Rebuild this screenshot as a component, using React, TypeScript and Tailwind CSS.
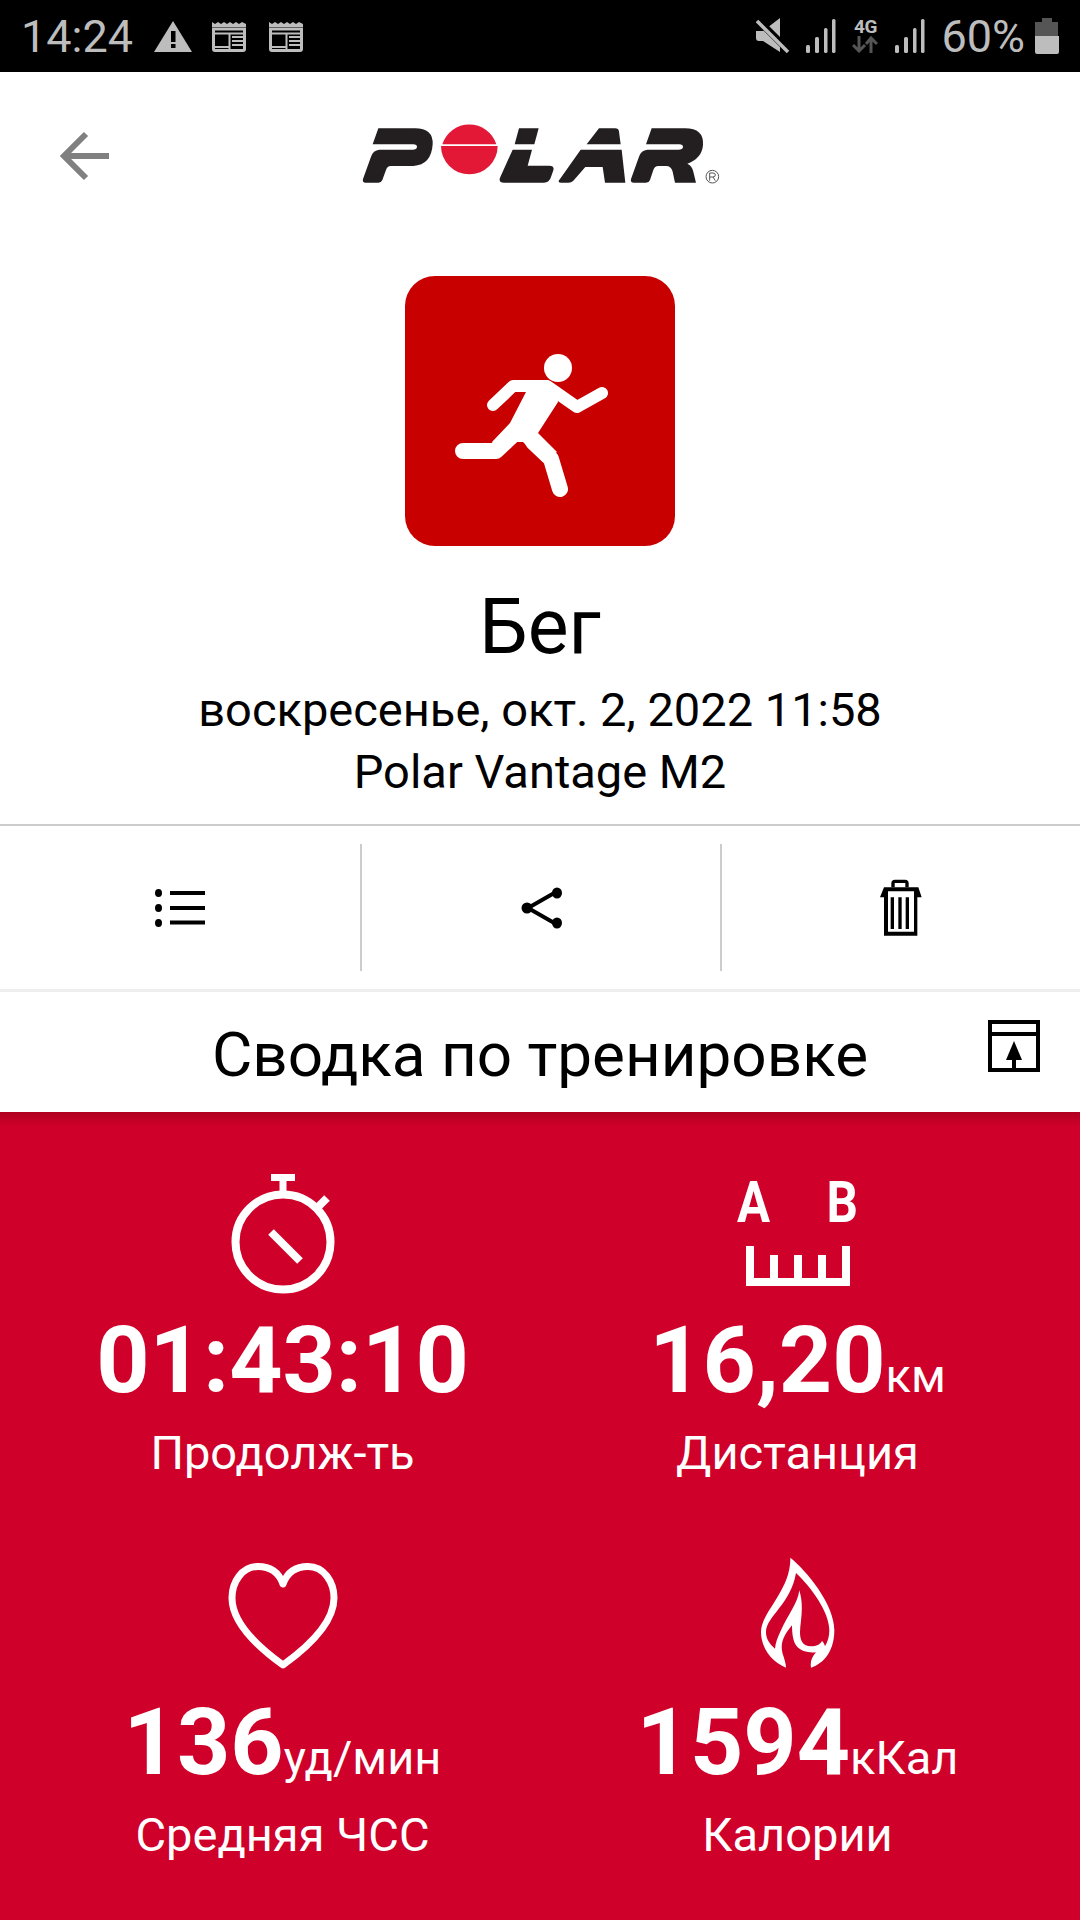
import React from "react";

const F = "font-['Roboto',sans-serif]";

function Logo() {
  return (
    <svg width="380" height="80" viewBox="0 0 1140 240" className="block">
      <g fill="#231f20">
        <path d="M85 40 H195 Q250 40 248 88 Q244 150 190 153 H122 Q112 153 108 165 L97 195 Q94 203 85 203 H47 Q36 203 39 192 L63 125 Q69 106 88 104 H188 Q200 104 201 96 Q201 88 190 88 H68 Z" />
        <path d="M507 40 H566 L553 88 H494 Z" />
        <path d="M488 104 H546 L533 152 H598 Q614 152 610 166 L603 186 Q598 203 582 203 H462 Q445 203 450 188 Z" />
        <path d="M747 40 H795 Q806 40 807 50 L812 88 H710 Z" />
        <path d="M692 104 H815 L826 203 H765 L758 156 H706 L670 197 Q664 203 655 203 H634 Q620 203 630 192 Z" />
        <path d="M905 40 H1005 Q1062 40 1059 90 Q1056 130 1012 146 Q1026 152 1030 170 L1038 203 H975 L968 170 Q964 153 948 153 H925 Q914 153 910 165 L900 195 Q897 203 888 203 H852 Q840 203 843 192 L867 125 Q873 106 892 104 H985 Q998 104 999 96 Q999 88 988 88 H888 Z" />
      </g>
      <path d="M277 88 A85 85 0 0 1 439 88 Z" fill="#e31837" />
      <path d="M273 93 H443 A85 85 0 1 1 273 93 Z" fill="#e31837" />
      <circle cx="1087" cy="185" r="19" fill="none" stroke="#555" strokeWidth="3" />
      <path d="M1079 197 V174 H1089 Q1096 174 1096 180 Q1096 186 1089 186 H1079 M1089 186 L1096 197" fill="none" stroke="#555" strokeWidth="3" />
    </svg>
  );
}

function Runner() {
  return (
    <svg width="270" height="270" viewBox="0 0 270 270" className="block">
      <rect width="270" height="270" rx="30" fill="#c80000" />
      <circle cx="153" cy="92" r="14" fill="#fff" />
      <path d="M88 129 L108 110 H142 L172 131 L197 117" fill="none" stroke="#fff" strokeWidth="12" strokeLinecap="round" strokeLinejoin="round" />
      <path d="M122 114 H150 L153 126 L133 157 L152 176 L138 186 L118 166 L112 166 L92 181 L87 166 L105 147 Z" fill="#fff" />
      <path d="M58 175 H91 L111 156 M128 166 L146 183 L155 213" fill="none" stroke="#fff" strokeWidth="16" strokeLinecap="round" strokeLinejoin="round" />
    </svg>
  );
}

function Stopwatch() {
  return (
    <svg width="106" height="122" viewBox="0 0 106 122" className="block" fill="none" stroke="#fff">
      <path d="M41 3.500 H65 M53 3.500 V18" strokeWidth="7" />
      <circle cx="53" cy="68" r="47.500" strokeWidth="8" />
      <path d="M89 32 L97 24" strokeWidth="8" />
      <path d="M41 58 L70 87" strokeWidth="8" />
    </svg>
  );
}

function Distance() {
  return (
    <div className="flex flex-col items-center w-[122px] mb-[10px]">
      <div className="flex justify-between w-[122px] h-[51px] text-[58px] leading-[51px] font-bold text-white">
        <span className="inline-block scale-x-[0.85] origin-left">A</span>
        <span className="inline-block scale-x-[0.85] origin-right">B</span>
      </div>
      <svg width="104" height="40" viewBox="0 0 104 40" className="block mt-[18px]" fill="none" stroke="#fff" strokeWidth="8">
        <path d="M4 0 V36 H100 V0 M28 9 V36 M52 9 V36 M76 9 V36" />
      </svg>
    </div>
  );
}

function Heart() {
  return (
    <svg width="110" height="106" viewBox="0 0 110 106" className="block" fill="none">
      <path d="M55 21 C50 7 39 3.500 30 3.500 C14 3.500 4 19 4 35 C4 60 30 84 55 102 C80 84 106 60 106 35 C106 19 96 3.500 80 3.500 C71 3.500 60 7 55 21 Z" stroke="#fff" strokeWidth="7" strokeLinejoin="round" />
    </svg>
  );
}

function Flame() {
  return (
    <svg width="74" height="112" viewBox="45 30 222 336" className="block" fill="#fff">
      <path
        fillRule="evenodd"
        d="M133 32 C180 70 265 170 265 250 C265 310 235 350 195 362 C192 345 197 330 210 316 C190 318 165 315 150 295 C140 280 138 255 138 235 C118 260 100 285 110 320 C115 335 120 350 120 362 C75 345 45 300 45 255 C45 195 135 130 133 32 Z M150 78 C195 120 250 195 250 250 C250 268 245 285 237 298 C235 290 232 285 228 282 C222 292 212 298 195 298 C170 298 162 280 162 255 C163 220 175 180 160 130 C155 170 125 205 105 250 C95 270 88 290 87 305 C70 290 60 275 60 255 C60 210 135 170 150 78 Z"
      />
    </svg>
  );
}

function Stat({ icon, value, unit, label, valueClass }: { icon: React.ReactNode; value: string; unit?: string; label: string; valueClass: string }) {
  return (
    <div className="flex flex-col items-center text-white">
      <div className="flex items-end justify-center h-[122px]">{icon}</div>
      <div className={`flex items-baseline justify-center whitespace-nowrap h-[94px] ${valueClass}`}>
        <span className="text-[93px] leading-[94px] font-bold">{value}</span>
        {unit && <span className="text-[47px] leading-[94px]">{unit}</span>}
      </div>
      <div className="text-[47px] leading-[52px] mt-[19px]">{label}</div>
    </div>
  );
}

function Signal({ className }: { className: string }) {
  return (
    <svg width="30" height="34" viewBox="0 0 30 34" className={className} fill="#bdbdbd">
      <rect x="0" y="26" width="4" height="8" rx="1.500" />
      <rect x="9" y="18" width="4" height="16" rx="1.500" />
      <rect x="18" y="9" width="3.500" height="25" rx="1.500" />
      <rect x="26" y="0" width="3.500" height="34" rx="1.500" />
    </svg>
  );
}

export default function App() {
  return (
    <div className={`w-[1080px] h-[1920px] overflow-hidden bg-white flex flex-col ${F}`}>
      <div className="h-[72px] bg-black flex items-center justify-between pl-[21px] pr-[21px] text-[#bdbdbd] shrink-0">
        <div className="flex items-center">
          <span className="text-[45px] leading-none">14:24</span>
          <svg width="38" height="31" viewBox="0 0 38 31" className="ml-[21px]">
            <path d="M19 0 L38 31 H0 Z" fill="#bdbdbd" />
            <rect x="17" y="10" width="4.500" height="11" fill="#000" />
            <rect x="17" y="23" width="4.500" height="4" fill="#000" />
          </svg>
          {[0, 1].map((i) => (
            <svg key={i} width="34" height="31" viewBox="0 0 34 31" className={i === 0 ? "ml-[20px]" : "ml-[23px]"} fill="none" stroke="#bdbdbd">
              <path d="M0 1 L3 3 L6 1 L9 3 L12 1 L15 3 L18 1 L21 3 L24 1 L27 3 L30 1 L34 3 V6 H0 Z" fill="#bdbdbd" stroke="none" />
              <path d="M1.500 8 H32.500 V28 Q32.500 29.500 31 29.500 H3 Q1.500 29.500 1.500 28 Z" strokeWidth="3" />
              <path d="M2 12.500 H32 M17.500 12.500 V28 M20 16 H32 M20 20 H32 M20 24 H32" strokeWidth="2" />
              <path d="M2 26 H17" strokeWidth="2" />
            </svg>
          ))}
        </div>
        <div className="flex items-center">
          <svg width="34" height="36" viewBox="0 0 34 36">
            <path d="M0 13 L7 13 L24 0 V34 L7 23 H3 Q0 23 0 20 Z" fill="#bdbdbd" />
            <path d="M0 0 L33 33" stroke="#000" strokeWidth="7" />
            <path d="M1 3 L32 34" stroke="#bdbdbd" strokeWidth="3.500" />
          </svg>
          <Signal className="ml-[16px]" />
          <div className="ml-[16px] w-[26px] h-[38px] flex flex-col items-center">
            <span className="text-[19px] leading-[19px] font-bold tracking-[-0.5px]">4G</span>
            <svg width="26" height="17" viewBox="0 0 26 17" fill="none" stroke="#555" strokeWidth="3">
              <path d="M7 0 V15 M1 9 L7 15 L13 9" />
              <path d="M19 17 V2 M14 8 L19 2 L25 8" />
            </svg>
          </div>
          <Signal className="ml-[17px]" />
          <span className="text-[45px] leading-none ml-[16px]">60%</span>
          <svg width="24" height="36" viewBox="0 0 24 36" className="ml-[10px]">
            <path d="M7 0 H17 V4 H23 V18 H0 V4 H7 Z" fill="#555" />
            <path d="M0 18 H24 V34 Q24 36 22 36 H2 Q0 36 0 34 Z" fill="#bdbdbd" />
          </svg>
        </div>
      </div>

      <div className="relative h-[148px] shrink-0">
        <svg width="50" height="50" viewBox="0 0 50 50" className="absolute left-[60px] top-[59px]" fill="none" stroke="#808080" strokeWidth="6">
          <path d="M49 25 H5 M26 3 L4 25 L26 47" />
        </svg>
        <div className="absolute left-[350px] top-[43px]">
          <Logo />
        </div>
      </div>

      <div className="flex justify-center shrink-0 mt-[56px]">
        <Runner />
      </div>

      <div className="text-center text-black shrink-0">
        <div className="text-[77px] leading-[84px] mt-[39px]">Бег</div>
        <div className="text-[47px] leading-[52px] mt-[15px]">воскресенье, окт. 2, 2022 11:58</div>
        <div className="text-[47px] leading-[52px] mt-[10px]">Polar Vantage M2</div>
      </div>

      <div className="mt-[26px] h-[2px] bg-[#cccccc] shrink-0" />

      <div className="flex h-[163px] shrink-0 py-[18px]">
        <div className="w-[362px] flex items-center justify-center border-r-2 border-[#cccccc]">
          <svg width="50" height="38" viewBox="0 0 50 38" fill="#000">
            <ellipse cx="3.500" cy="4" rx="3.500" ry="4" />
            <ellipse cx="3.500" cy="19" rx="3.500" ry="4" />
            <ellipse cx="3.500" cy="34" rx="3.500" ry="4" />
            <rect x="15" y="2" width="35" height="4" />
            <rect x="15" y="17" width="35" height="4" />
            <rect x="15" y="31.500" width="35" height="4" />
          </svg>
        </div>
        <div className="w-[360px] flex items-center justify-center border-r-2 border-[#cccccc]">
          <svg width="42" height="42" viewBox="0 0 42 42" fill="#000" className="ml-[2px]">
            <path d="M35 5 L7 21 L35 37" fill="none" stroke="#000" strokeWidth="4" />
            <ellipse cx="36" cy="6" rx="5" ry="5.500" />
            <ellipse cx="6" cy="21" rx="5.500" ry="5.500" />
            <ellipse cx="36" cy="36" rx="5" ry="5.500" />
          </svg>
        </div>
        <div className="flex-1 flex items-center justify-center">
          <svg width="44" height="58" viewBox="30 30 132 174">
            <path fillRule="evenodd" d="M33 85 L45 55 H148 L158 85 H145 V200 H45 V85 Z M57 67 H135 V188 H57 Z" fill="#000" />
            <path d="M72 55 V43 Q72 37 78 37 H108 Q114 37 114 43 V55" fill="none" stroke="#000" strokeWidth="10" />
            <path d="M70 85 V180 M93 85 V180 M115 85 V180" fill="none" stroke="#000" strokeWidth="10" />
          </svg>
        </div>
      </div>

      <div className="h-[3px] bg-[#eeeeee] shrink-0" />

      <div className="relative h-[120px] flex items-center justify-center shrink-0 pt-[6px]">
        <span className="text-[62px] leading-none text-black">Сводка по тренировке</span>
        <svg width="52" height="52" viewBox="0 0 52 52" className="absolute right-[40px] top-[28px]" fill="none" stroke="#000" strokeWidth="4">
          <rect x="2" y="2" width="48" height="48" />
          <path d="M2 14 H50" />
          <path d="M26 21 L34 40 H18 Z" fill="#000" stroke="none" />
          <path d="M26 40 V50" />
        </svg>
      </div>

      <div className="flex-1 bg-[#cf0029] grid grid-cols-[565px_515px] content-start bg-[linear-gradient(#b0001f_0,#cf0029_14px)] pt-[62px]">
        <div>
          <Stat icon={<Stopwatch />} value="01:43:10" label="Продолж-ть" valueClass="mt-[18px]" />
        </div>
        <div className="pr-[50px]">
          <Stat icon={<Distance />} value="16,20" unit="км" label="Дистанция" valueClass="mt-[18px]" />
        </div>
        <div className="mt-[68px]">
          <Stat icon={<Heart />} value="136" unit="уд/мин" label="Средняя ЧСС" valueClass="mt-[27px]" />
        </div>
        <div className="mt-[68px] pr-[50px]">
          <Stat icon={<Flame />} value="1594" unit="кКал" label="Калории" valueClass="mt-[27px]" />
        </div>
      </div>
    </div>
  );
}
